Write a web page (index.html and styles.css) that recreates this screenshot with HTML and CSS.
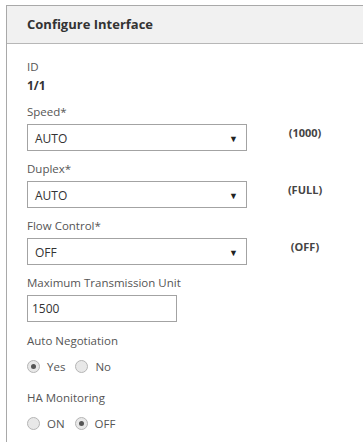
FILE: index.html
```html
<!DOCTYPE html>
<html lang="en">
<head>
    <meta charset="UTF-8">
    <title>Configure Interface</title>
    <link rel="stylesheet" href="styles.css">
</head>
<body>
    <div class="panel">
        <div class="panel-header">Configure Interface</div>
        <div class="panel-body">
            <div class="field">
                <div class="label">ID</div>
                <div class="value">1/1</div>
            </div>

            <div class="field">
                <div class="label">Speed*</div>
                <div class="row">
                    <div class="select"><span>AUTO</span><span class="arrow">&#9660;</span></div>
                    <div class="note">(1000)</div>
                </div>
            </div>

            <div class="field">
                <div class="label">Duplex*</div>
                <div class="row">
                    <div class="select"><span>AUTO</span><span class="arrow">&#9660;</span></div>
                    <div class="note">(FULL)</div>
                </div>
            </div>

            <div class="field">
                <div class="label">Flow Control*</div>
                <div class="row">
                    <div class="select"><span>OFF</span><span class="arrow">&#9660;</span></div>
                    <div class="note">(OFF)</div>
                </div>
            </div>

            <div class="field">
                <div class="label">Maximum Transmission Unit</div>
                <div class="input">1500</div>
            </div>

            <div class="field radios-field">
                <div class="label">Auto Negotiation</div>
                <div class="radios">
                    <span class="radio checked"></span><span class="opt">Yes</span>
                    <span class="radio"></span><span class="opt">No</span>
                </div>
            </div>

            <div class="field radios-field">
                <div class="label">HA Monitoring</div>
                <div class="radios">
                    <span class="radio"></span><span class="opt">ON</span>
                    <span class="radio checked"></span><span class="opt">OFF</span>
                </div>
            </div>
        </div>
    </div>
</body>
</html>
```

FILE: styles.css
```css
body {
    margin: 0;
    background-color: #fff;
    font-family: 'Open Sans', 'Noto Sans', sans-serif;
    font-size: 11.5px;
    color: #555;
    overflow: hidden;
}

.panel {
    margin: 5px 0 0 6px;
    border: 1px solid #a9a9a9;
    border-right: none;
    border-bottom: none;
    height: 437px;
    box-sizing: border-box;
}

.panel-header {
    height: 37px;
    line-height: 37px;
    padding-left: 20px;
    background-color: #f1f1f1;
    border-bottom: 1px solid #b7b7b7;
    font-size: 13px;
    font-weight: bold;
    color: #333;
}

.panel-body {
    padding: 15px 0 0 20px;
}

.field {
    margin-bottom: 10px;
}

.label {
    line-height: 16px;
    margin-bottom: 4px;
}

.value {
    font-weight: bold;
    font-size: 12px;
    color: #333;
    line-height: 16px;
    margin-top: -1px;
}

.row {
    display: flex;
    align-items: flex-start;
}

.select {
    width: 220px;
    height: 27px;
    box-sizing: border-box;
    border: 1px solid #a3a3a3;
    display: flex;
    align-items: center;
    justify-content: space-between;
    padding: 2px 8px 0 7px;
    font-size: 12px;
    color: #333;
}

.arrow {
    font-size: 9px;
    color: #222;
}

.note {
    width: 60px;
    margin-left: 28px;
    margin-top: 1px;
    text-align: center;
    font-size: 11px;
    font-weight: bold;
    color: #444;
}

.input {
    width: 150px;
    height: 27px;
    box-sizing: border-box;
    border: 1px solid #a3a3a3;
    padding: 4px 4px 0;
    font-size: 12px;
    color: #333;
}

.radios-field {
    margin-top: 11px;
}

.radios-field + .radios-field {
    margin-top: 16px;
}

.radios {
    display: flex;
    align-items: center;
    margin-top: 10px;
}

.radio {
    width: 11px;
    height: 11px;
    border: 1px solid #b5b5b5;
    border-radius: 50%;
    background-color: #e8e8e8;
    display: flex;
    align-items: center;
    justify-content: center;
}

.radio.checked::after {
    content: "";
    width: 5px;
    height: 5px;
    border-radius: 50%;
    background-color: #555;
}

.opt {
    margin: 0 10px 0 7px;
}
```
